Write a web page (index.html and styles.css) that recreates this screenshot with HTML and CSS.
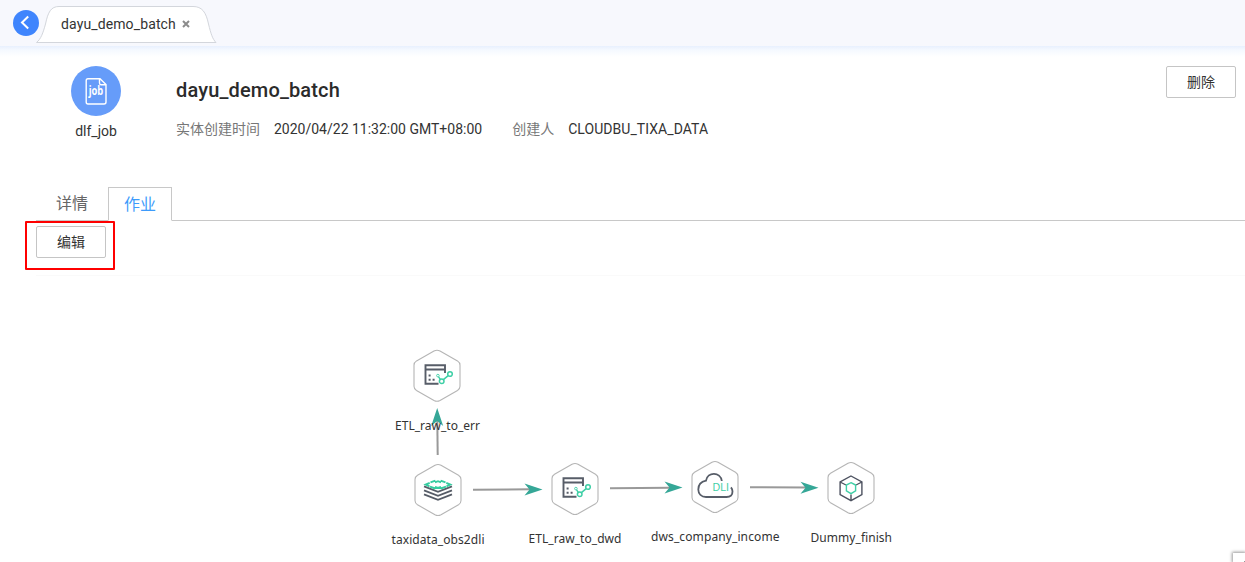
FILE: index.html
```
<!DOCTYPE html>
<html lang="zh-CN">
<head>
<meta charset="utf-8">
<title>dayu_demo_batch</title>
<link rel="stylesheet" href="styles.css">
</head>
<body>
<div class="page">
  <header class="topbar">
    <svg class="back" viewBox="0 0 26 26"><circle cx="13" cy="13" r="13" fill="#3f85fd"/><path d="M15.200 6.500 L9 12.500 L15.200 18.500" fill="none" stroke="#fff" stroke-width="2"/></svg>
    <div class="tab">
      <svg class="tab-shape" viewBox="0 0 181 38"><path d="M.5 36.500 C5 33 7 27 9.500 18 C12 6 15 .5 23 .5 H157 C166 .5 170 6 172.500 18 C175 28 176.500 33 180 36.500 Z" fill="#fff" stroke="#d3d6dc"/></svg>
      <span class="tab-name">dayu_demo_batch</span>
      <svg class="close" viewBox="0 0 8 8"><path d="M1 1 L7 7 M7 1 L1 7" stroke="#8c8c8c" stroke-width="2"/></svg>
    </div>
  </header>

  <section class="summary">
    <div class="kind">
      <svg class="kind-icon" viewBox="0 0 50 50"><circle cx="25" cy="25" r="25" fill="#669cf9"/><path d="M17 12.700 H29 L35 18.500 V36 Q35 38 33 38 H17 Q15.200 38 15.200 36 V14.500 Q15.200 12.700 17 12.700 Z M28.500 13 V17 Q28.500 18.700 30 18.700 H35" fill="none" stroke="#fff" stroke-width="1.400"/><text x="25" y="29" text-anchor="middle" textLength="14.500" lengthAdjust="spacingAndGlyphs" class="job">job</text></svg>
      <span>dlf_job</span>
    </div>
    <div class="info">
      <h1>dayu_demo_batch</h1>
      <div class="meta">
        <span class="key">实体创建时间</span><span class="created">2020/04/22 11:32:00 GMT+08:00</span>
        <span class="key">创建人</span><span class="creator">CLOUDBU_TIXA_DATA</span>
      </div>
    </div>
    <button class="btn">删除</button>
  </section>

  <nav class="tabs">
    <span class="item">详情</span>
    <span class="item active">作业</span>
  </nav>

  <div class="toolbar">
    <div class="highlight"><button class="btn">编辑</button></div>
  </div>

  <main class="canvas">
    <svg class="graph" viewBox="0 275 1245 287">
      <defs>
        <path id="hex" d="M-3 -24.700 Q0 -26.300 3 -24.700 L20.500 -14.800 Q23 -13.300 23 -10.500 V10.500 Q23 13.300 20.500 14.800 L3 24.700 Q0 26.300 -3 24.700 L-20.500 14.800 Q-23 13.300 -23 10.500 V-10.500 Q-23 -13.300 -20.500 -14.800 Z" fill="#fff" stroke="#b5b5b5" stroke-width="1.100"/>
        <path id="arrow" d="M0 0 L-18 -6 L-13 0 L-18 6 Z" fill="#35a797"/>
        <g id="etl" fill="none">
          <path d="M1.500 7.700 H-11.500 V-10.800 H8 V-3 M-11.500 -6.500 H8" stroke="#575d68" stroke-width="1.900"/>
          <path d="M-8.400 -1.400 h2 v2 h-2z M-8.400 2.700 h2 v2 h-2z M-4.400 2.700 h2 v2 h-2z" fill="#575d68"/>
          <g stroke="#3fcfa6" stroke-width="1.500"><path d="M1.600 .8 L3.300 3.300 M6.400 3.600 L11.200 -.4"/><circle cx=".9" cy="-.4" r="1.300" stroke-width=".9"/><circle cx="4.700" cy="5.200" r="2.300"/><circle cx="13" cy="-2" r="2.300"/></g>
        </g>
      </defs>

      <g fill="none" stroke="#999" stroke-width="2">
        <path d="M437.700 455 L437.300 420"/>
        <path d="M473 489.800 L530 489.300"/>
        <path d="M610 488.300 L670 487.700"/>
        <path d="M750 487.200 L807 487.600"/>
      </g>

      <use href="#hex" x="437" y="375.700"/>
      <use href="#etl" x="437" y="376"/>
      <use href="#arrow" transform="translate(437.200 408) rotate(-90)"/>

      <use href="#hex" x="438" y="490"/>
      <g transform="translate(438 490)" fill="none">
        <path d="M-14 -3.700 L0 1.900 L14 -3.700 M-14 .3 L0 5.900 L14 .3 M-14 4.300 L0 9.900 L14 4.300" stroke="#575d68" stroke-width="1.800"/>
        <path d="M-7.500 -7.600 L-2.600 -9.300 M2.600 -9.300 L7.500 -7.600 M-8 -3.300 L-2.800 -1.500 M8 -3.300 L2.800 -1.500 M-8.300 -7.100 L-12.300 -5.400 L-8.500 -3.700 M8.300 -7.100 L12.300 -5.400 L8.500 -3.700 M-3 -7.600 L0 -8.800 L3 -7.600 M-3 -3.200 L0 -2 L3 -3.200" stroke="#35cca0" stroke-width="1.900"/>
      </g>

      <use href="#arrow" transform="translate(542.500 489.400)"/>
      <use href="#hex" x="575" y="489"/>
      <use href="#etl" x="575" y="489"/>

      <use href="#arrow" transform="translate(682.500 487.600)"/>
      <use href="#hex" x="715" y="487"/>
      <path d="M721.800 481 C720.500 471.500 707.500 471.500 706 480.700 C700.500 481.800 698.300 485.300 698.300 489.500 C698.300 494 701.500 497 706 497 H726.500 C730.500 497 732.500 494.500 732.500 491.500 C732.500 489.800 732 488.500 731 487.300" fill="none" stroke="#575d68" stroke-width="1.800"/>
      <text class="dli" x="712.500" y="490.800" textLength="16.500" lengthAdjust="spacingAndGlyphs">DLI</text>

      <use href="#arrow" transform="translate(818.500 487.800)"/>
      <use href="#hex" x="851" y="488"/>
      <g transform="translate(851 488)" fill="none">
        <path d="M0 -12 L10.900 -6 V6.500 L0 12.700 L-10.900 6.500 V-6 Z M-10.900 -6 L-5 -3 M10.900 -6 L5 -3 M0 6.400 V12.700" stroke="#4d5260" stroke-width="1.400"/>
        <path d="M0 -5.300 L4.600 -3 V2.900 L0 5.700 L-4.600 2.900 V-3 Z" stroke="#3fcfa6" stroke-width="1.400"/>
      </g>

      <g class="labels">
        <text x="395" y="430" textLength="85">ETL_raw_to_err</text>
        <text x="391.500" y="544" textLength="93">taxidata_obs2dli</text>
        <text x="528.500" y="543" textLength="93">ETL_raw_to_dwd</text>
        <text x="651" y="541" textLength="128.500">dws_company_income</text>
        <text x="810.500" y="542" textLength="81.500">Dummy_finish</text>
      </g>
    </svg>
    <div class="corner"><i class="mark"></i></div>
  </main>
</div>
</body>
</html>
```
FILE: styles.css
```
* { box-sizing: border-box; }
body { margin: 0; background: #fff; }
.page {
  width: 1245px;
  height: 562px;
  overflow: hidden;
  display: flex;
  flex-direction: column;
  font: 14px/20px Roboto, "Noto Sans CJK SC", sans-serif;
  color: #333;
}
.topbar {
  flex: none;
  height: 60px;
  display: flex;
  align-items: flex-start;
  padding: 6px 0 0 13px;
  background: linear-gradient(#f7f8fd 0, #f7f8fd 46px, #e8f0fe 46px, #f5f9ff 50px, #fff 57px);
}
.back { width: 26px; height: 26px; margin-top: 4px; }
.tab { position: relative; width: 181px; height: 37px; margin-left: -3px; display: flex; align-items: center; padding: 0 0 2px 25px; }
.tab-shape { position: absolute; left: 0; top: 0; width: 181px; height: 38px; }
.tab-name { position: relative; letter-spacing: .12px; }
.close { position: relative; width: 8px; height: 8px; margin-left: 6px; }
.summary { flex: none; height: 127px; display: flex; align-items: flex-start; padding: 6px 9px 0 71px; }
.kind { width: 50px; display: flex; flex-direction: column; align-items: center; gap: 5px; }
.kind-icon { width: 50px; height: 50px; }
.job { font: bold 12px "Open Sans", sans-serif; fill: #fff; }
.info { flex: 1; padding: 10px 0 0 55px; }
h1 { margin: 0; font-size: 20px; line-height: 28px; font-weight: 500; letter-spacing: .15px; color: #2b2b2b; }
.meta { display: flex; margin-top: 15px; }
.key { color: #777; margin-right: 14px; }
.created { margin-right: 30px; }
.creator { letter-spacing: .06px; }
.btn {
  width: 70px;
  height: 32px;
  padding: 0;
  border: 1px solid #c5c5c5;
  border-radius: 2px;
  background: #fff;
  font: 14px/20px Roboto, "Noto Sans CJK SC", sans-serif;
  color: #333;
}
.tabs { flex: none; height: 34px; display: flex; padding-left: 36px; font-size: 16px; line-height: 34px; color: #666; }
.tabs::after { content: ""; flex: 1; border-bottom: 1px solid #c8c8c8; }
.item { width: 72px; height: 34px; text-align: center; border-bottom: 1px solid #c8c8c8; }
.active { width: 64px; border: 1px solid #c8c8c8; border-bottom-color: #fff; color: #3d9bfb; }
.toolbar { flex: none; height: 54px; padding-left: 25px; }
.highlight { width: 90px; height: 49px; border: 2px solid #f00; border-radius: 1px; padding: 3px 0 0 9px; }
.highlight .btn { display: block; }
.canvas { position: relative; flex: none; height: 287px; }
.canvas::before { content: ""; position: absolute; left: 36px; right: 0; top: 0; height: 1px; background: #fafafa; }
.graph { display: block; width: 1245px; height: 287px; }
.labels { font: 12px "Noto Sans", sans-serif; fill: #333; }
.dli { font: 10px "Liberation Sans", sans-serif; fill: #3fcfa6; }
.corner { position: absolute; right: 0; bottom: 0; width: 12px; height: 9px; background: #fff; box-shadow: 0 0 3px 1px #999; }
.mark { position: absolute; right: 0; bottom: 0; width: 1px; height: 1px; background: #999; }
```
